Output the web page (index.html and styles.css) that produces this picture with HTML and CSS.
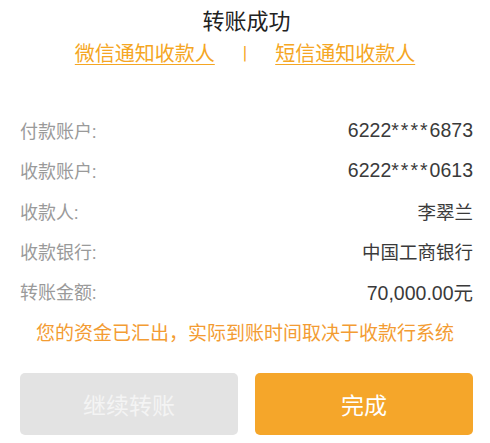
FILE: index.html
```html
<!DOCTYPE html>
<html lang="zh-CN">
<head>
  <meta charset="UTF-8">
  <meta name="viewport" content="width=device-width, initial-scale=1.0">
  <title>转账成功</title>
  <link rel="stylesheet" href="styles.css">
</head>
<body>
  <div class="result-page">
    <h1 class="result-title">转账成功</h1>

    <div class="notify-links">
      <a href="#" class="notify-link">微信通知收款人</a>
      <span class="notify-sep">|</span>
      <a href="#" class="notify-link">短信通知收款人</a>
    </div>

    <div class="detail-list">
      <div class="detail-item">
        <span class="detail-label">付款账户:</span>
        <span class="detail-value">6222<span class="mask">****</span>6873</span>
      </div>
      <div class="detail-item">
        <span class="detail-label">收款账户:</span>
        <span class="detail-value">6222<span class="mask">****</span>0613</span>
      </div>
      <div class="detail-item">
        <span class="detail-label">收款人:</span>
        <span class="detail-value detail-value--cn">李翠兰</span>
      </div>
      <div class="detail-item">
        <span class="detail-label">收款银行:</span>
        <span class="detail-value detail-value--cn">中国工商银行</span>
      </div>
      <div class="detail-item">
        <span class="detail-label">转账金额:</span>
        <span class="detail-value">70,000.00元</span>
      </div>
    </div>

    <p class="result-notice">您的资金已汇出，实际到账时间取决于收款行系统</p>

    <div class="action-bar">
      <button class="btn btn-gray">继续转账</button>
      <button class="btn btn-primary">完成</button>
    </div>
  </div>
</body>
</html>
```

FILE: styles.css
```css
:root {
  --orange: #f5a623;
  --text: #222;
  --value: #3a3a3a;
  --label: #9a9a9a;
}

* {
  margin: 0;
  padding: 0;
  box-sizing: border-box;
}

body {
  font-family: Roboto, "Noto Sans CJK SC", sans-serif;
  background: #fff;
  color: var(--text);
}

.result-page {
  width: 490px;
  padding: 7px 17px 0 20px;
}

.result-title {
  font-size: 22px;
  font-weight: 400;
  line-height: 30px;
  text-align: center;
  color: var(--text);
}

.notify-links {
  display: flex;
  justify-content: center;
  align-items: center;
  gap: 28px;
  height: 30px;
  margin-left: -3px;
  font-size: 20px;
}

.notify-link {
  color: var(--orange);
  text-decoration: underline;
  text-underline-offset: 3px;
  text-decoration-thickness: 1px;
}

.notify-sep {
  color: var(--orange);
  font-size: 18px;
}

.detail-list {
  margin-top: 43px;
}

.detail-item {
  display: flex;
  justify-content: space-between;
  align-items: center;
  height: 40.3px;
  font-size: 18px;
}

.detail-label {
  color: var(--label);
}

.detail-value {
  color: var(--value);
  font-family: "Liberation Sans", "Noto Sans CJK SC", sans-serif;
  font-size: 19.5px;
}

.detail-value--cn {
  font-family: "Noto Sans CJK SC", sans-serif;
  font-size: 18.5px;
}

.mask {
  letter-spacing: 2px;
}

.result-notice {
  margin-top: 2px;
  margin-left: -3px;
  height: 42px;
  line-height: 42px;
  text-align: center;
  font-size: 19px;
  color: #f39c33;
}

.action-bar {
  display: flex;
  gap: 17px;
  margin-top: 18px;
}

.btn {
  flex: 1;
  height: 62px;
  border: none;
  border-radius: 5px;
  font-family: inherit;
  font-size: 23px;
  color: #fff;
}

.btn-gray {
  background: #e3e3e3;
  color: #f4f4f4;
}

.btn-primary {
  background: #f5a62a;
}
```
